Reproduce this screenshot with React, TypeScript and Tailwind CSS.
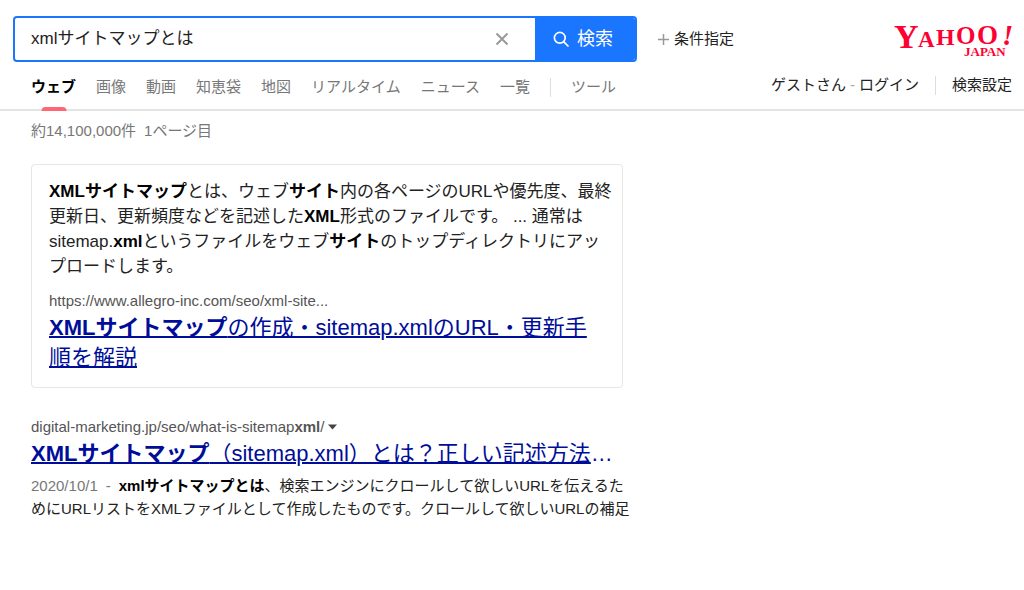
import { useState } from 'react'

const tabs = ['画像', '動画', '知恵袋', '地図', 'リアルタイム', 'ニュース', '一覧']

function YahooLogo() {
  return (
    <svg
      width="120"
      height="40"
      viewBox="0 0 120 40"
      fill="#ff0033"
      role="img"
      aria-label="Yahoo! JAPAN"
      className="overflow-visible font-['Liberation_Serif',serif] font-bold"
    >
      <text x="0" y="29" fontSize="34">Y</text>
      <text x="24" y="28" fontSize="23">A</text>
      <text x="42" y="26" fontSize="24">H</text>
      <text x="62" y="25" fontSize="25">O</text>
      <text x="83" y="25" fontSize="27">O</text>
      <text x="108" y="26" fontSize="29" fontStyle="italic">!</text>
      <text x="70" y="37" fontSize="13">JAPAN</text>
    </svg>
  )
}

function SearchForm() {
  const [query, setQuery] = useState('xmlサイトマップとは')

  return (
    <form
      className="flex h-[46px] w-full max-w-[624px] overflow-hidden rounded border-2 border-[#1a75ff]"
      onSubmit={(e) => e.preventDefault()}
    >
      <input
        type="text"
        aria-label="検索キーワード"
        value={query}
        onChange={(e) => setQuery(e.target.value)}
        className="min-w-0 flex-1 pl-4 text-[17px] text-[#222] outline-none"
      />
      <button type="button" aria-label="クリア" onClick={() => setQuery('')} className="flex w-[66px] items-center justify-center">
        <svg width="14" height="14" viewBox="0 0 14 14" stroke="#999" strokeWidth="2">
          <path d="M1.5 1.5l11 11M12.5 1.5l-11 11" />
        </svg>
      </button>
      <button type="submit" className="flex w-[100px] items-center justify-center gap-2 bg-[#1a75ff] pr-1 text-lg text-white">
        <svg width="16" height="16" viewBox="0 0 16 16" fill="none" stroke="#fff" strokeWidth="1.7">
          <circle cx="6.8" cy="6.8" r="5.4" />
          <path d="M10.8 10.8l4.2 4.2" strokeLinecap="round" />
        </svg>
        検索
      </button>
    </form>
  )
}

export default function App() {
  return (
    <div lang="ja" className="min-h-screen bg-white font-['Liberation_Sans','Noto_Sans_CJK_JP',sans-serif] text-[15px] text-[#222]">
      <header className="border-b-2 border-[#e4e4e4]">
        <div className="flex items-center pt-4 pr-[10px] pl-[13px]">
          <SearchForm />
          <button type="button" className="ml-5 flex shrink-0 items-center gap-1">
            <svg width="13" height="13" viewBox="0 0 13 13" stroke="#999" strokeWidth="1.5">
              <path d="M6.5 1v11M1 6.5h11" />
            </svg>
            条件指定
          </button>
          <a href="#" className="ml-auto shrink-0">
            <YahooLogo />
          </a>
        </div>

        <div className="flex h-[47px] justify-between pr-3 pl-[31px]">
          <nav className="flex gap-5 leading-[50px] whitespace-nowrap text-[#777]">
            <a href="#" className="relative font-bold text-black">
              ウェブ
              <span className="absolute -bottom-0.5 left-1/2 h-1 w-[25px] -translate-x-1/2 rounded-t-sm bg-[#ff6673]" />
            </a>
            {tabs.map((tab) => (
              <a key={tab} href="#">
                {tab}
              </a>
            ))}
            <span className="mt-4 h-[19px] w-px bg-[#ddd]" />
            <a href="#">ツール</a>
          </nav>
          <div className="flex leading-[46px] whitespace-nowrap">
            <span>ゲストさん</span>
            <span className="mx-1 text-[#aaa]">-</span>
            <a href="#">ログイン</a>
            <span className="mx-4 mt-[14px] h-[19px] w-px bg-[#ddd]" />
            <a href="#">検索設定</a>
          </div>
        </div>
      </header>

      <main className="max-w-[640px] pr-4 pl-[31px]">
        <p className="pt-2 leading-6 text-[#777]">
          約14,100,000件<span className="ml-2">1ページ目</span>
        </p>

        <section className="mt-[21px] max-w-[592px] rounded border border-[#e6e6e6] py-[14px] pr-2 pl-[17px]">
          <p className="text-[17px] leading-[25px]">
            <b className="text-black">XMLサイトマップ</b>とは、ウェブ<b className="text-black">サイト</b>
            内の各ページのURLや優先度、最終
            <br />
            更新日、更新頻度などを記述した<b className="text-black">XML</b>
            形式のファイルです。 ... 通常は
            <br />
            sitemap.<b className="text-black">xml</b>というファイルをウェブ<b className="text-black">サイト</b>
            のトップディレクトリにアッ
            <br />
            プロードします。
          </p>
          <p className="mt-3 text-[15px] leading-5 text-[#555]">https://www.allegro-inc.com/seo/xml-site...</p>
          <h3 className="mt-[2px] pr-5 text-[22px] leading-[30px] text-[#000d99]">
            <a href="#" className="underline decoration-2">
              <b>XMLサイトマップ</b>の作成・sitemap.xmlのURL・更新手順を解説
            </a>
          </h3>
        </section>

        <section className="mt-[29px]">
          <p className="flex items-center text-[15px] leading-5 text-[#555]">
            <span>
              digital-marketing.jp/seo/what-is-sitemap<b>xml</b>/
            </span>
            <button type="button" aria-label="メニュー" className="ml-1">
              <svg width="9" height="6" viewBox="0 0 9 6" fill="#444">
                <path d="M0 0.5h9L4.5 5.5z" />
              </svg>
            </button>
          </p>
          <h3 className="mt-[2px] text-[22px] leading-[30px] whitespace-nowrap text-[#000d99]">
            <a href="#" className="underline decoration-2">
              <b>XMLサイトマップ</b>（sitemap.xml）とは？正しい記述方法
            </a>
            …
          </h3>
          <p className="mt-[5px] leading-[23px] whitespace-nowrap">
            <span className="text-[#777]">2020/10/1</span>
            <span className="mx-2 text-[#777]">-</span>
            <b className="text-black">xmlサイトマップとは</b>、検索エンジンにクロールして欲しいURLを伝えるた
            <br />
            めにURLリストをXMLファイルとして作成したものです。クロールして欲しいURLの補足
          </p>
        </section>
      </main>
    </div>
  )
}
